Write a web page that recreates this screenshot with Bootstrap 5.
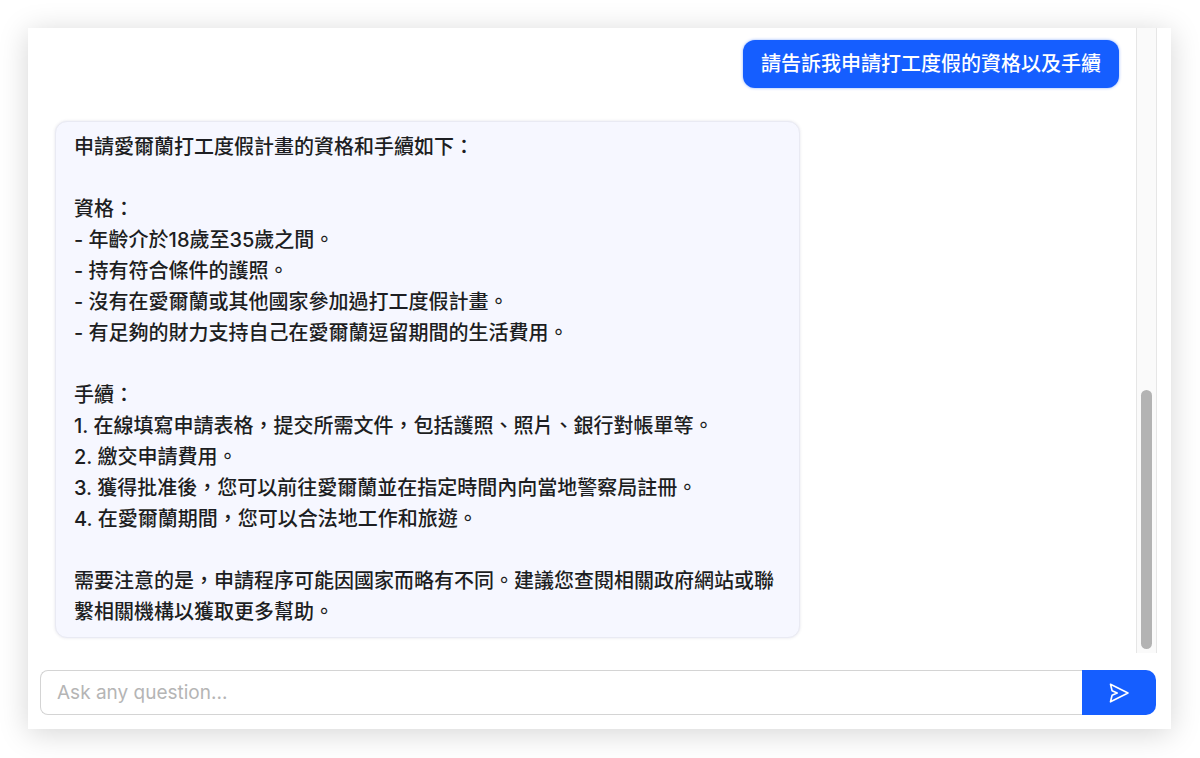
<!DOCTYPE html>
<html lang="zh-Hant-TW">
<head>
<meta charset="utf-8">
<meta name="viewport" content="width=device-width, initial-scale=1">
<title>Chat</title>
<link href="https://cdn.jsdelivr.net/npm/bootstrap@5.3.0/dist/css/bootstrap.min.css" rel="stylesheet">
<style>
  body { padding: 28px 29px 29px 28px; font-family: Inter, "Noto Sans CJK TC", sans-serif; font-size: 20px; font-weight: 500; color: #1d1e22; background: #fff; }
  .chat-panel { box-shadow: 0 4px 28px rgba(0, 0, 0, .17); }
  .message-list { gap: 33px; padding: 12px 17px 15px 27px; }
  .bubble { border-radius: 12px; padding: 8px 18px; line-height: 32px; }
  .bubble-user { background: #155eff; color: #fff; box-shadow: 0 0 3px rgba(21, 94, 255, .5); }
  .bubble-bot { max-width: 70%; padding: 10px 18px 9px; line-height: 31px; background: #f6f7ff; border: 1px solid #e9eaf3; box-shadow: 0 0 3px rgba(60, 60, 110, .15); white-space: pre-line; }
  .scroll-track { width: 21px; margin-right: 14px; padding: 4px 0; background: #fafafa; border: 1px solid #e6e6e6; border-width: 0 1px; }
  .scroll-thumb { width: 11px; height: 42%; border-radius: 6px; background: #b3b3b3; }
  .ask-bar { padding: 17px 15px 14px 12px; }
  .ask-bar .form-control { height: 45px; padding: 0 16px; font-size: 19px; border-color: #d4d4d4; border-right: 0; border-radius: 8px 0 0 8px; }
  .ask-bar .form-control::placeholder { color: #b5b5b5; opacity: 1; }
  .btn-send { width: 74px; padding: 0; border: 0; border-radius: 0 10px 10px 0; background: #155eff; color: #fff; }
  .btn-send:hover { background: #0d4fe0; color: #fff; }
</style>
</head>
<body class="d-flex flex-column min-vh-100">
<main class="chat-panel bg-white d-flex flex-column flex-grow-1">
  <section class="d-flex flex-grow-1" aria-label="Conversation">
    <div class="message-list d-flex flex-column flex-grow-1">
      <div class="bubble bubble-user align-self-end">請告訴我申請打工度假的資格以及手續</div>
      <div class="bubble bubble-bot align-self-start">申請愛爾蘭打工度假計畫的資格和手續如下：

資格：
- 年齡介於18歲至35歲之間。
- 持有符合條件的護照。
- 沒有在愛爾蘭或其他國家參加過打工度假計畫。
- 有足夠的財力支持自己在愛爾蘭逗留期間的生活費用。

手續：
1. 在線填寫申請表格，提交所需文件，包括護照、照片、銀行對帳單等。
2. 繳交申請費用。
3. 獲得批准後，您可以前往愛爾蘭並在指定時間內向當地警察局註冊。
4. 在愛爾蘭期間，您可以合法地工作和旅遊。

需要注意的是，申請程序可能因國家而略有不同。建議您查閱相關政府網站或聯繫相關機構以獲取更多幫助。</div>
    </div>
    <div class="scroll-track d-flex flex-column justify-content-end align-items-center flex-shrink-0" aria-hidden="true">
      <div class="scroll-thumb"></div>
    </div>
  </section>
  <form class="ask-bar input-group flex-nowrap">
    <input type="text" class="form-control" placeholder="Ask any question..." aria-label="Ask any question">
    <button type="button" class="btn btn-send d-flex align-items-center justify-content-center" aria-label="Send">
      <svg width="22" height="22" viewBox="0 0 22 22" fill="none" stroke="currentColor" stroke-width="1.6" stroke-linejoin="round" stroke-linecap="round" aria-hidden="true">
        <path d="M2.5 2.2 20 11 2.5 19.8 4.1 13.2 9.2 11 4.1 8.8Z"/>
      </svg>
    </button>
  </form>
</main>
<script src="https://cdn.jsdelivr.net/npm/bootstrap@5.3.0/dist/js/bootstrap.bundle.min.js"></script>
</body>
</html>
